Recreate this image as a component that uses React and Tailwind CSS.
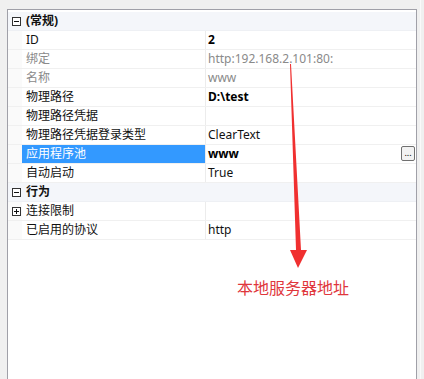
import React from 'react'

const rows = [
  { type: 'cat', label: '(常规)', open: true },
  { label: 'ID', value: '2', bold: true },
  { label: '绑定', value: 'http:192.168.2.101:80:', dim: true },
  { label: '名称', value: 'www', dim: true },
  { label: '物理路径', value: 'D:\\test', bold: true },
  { label: '物理路径凭据', value: '' },
  { label: '物理路径凭据登录类型', value: 'ClearText' },
  { label: '应用程序池', value: 'www', bold: true, selected: true, button: true },
  { label: '自动启动', value: 'True' },
  { type: 'cat', label: '行为', open: true },
  { label: '连接限制', value: '', expand: true },
  { label: '已启用的协议', value: 'http' },
]

function Box({ open }) {
  return (
    <svg width="9" height="9" viewBox="0 0 9 9" className="block">
      <rect x="0.5" y="0.5" width="8" height="8" fill="#fff" stroke="#333" />
      <line x1="2" y1="4.5" x2="7" y2="4.5" stroke="#111" />
      {!open && <line x1="4.5" y1="2" x2="4.5" y2="7" stroke="#111" />}
    </svg>
  )
}

function Row({ row }) {
  if (row.type === 'cat') {
    return (
      <div className="flex h-[19px] items-center bg-[#f4f6fa] border-b border-[#eef0f4]">
        <div className="w-[14px] flex justify-center pl-[3px]">
          <Box open={row.open} />
        </div>
        <span className="pl-[4px] font-bold text-[12px] text-[#111]">{row.label}</span>
      </div>
    )
  }

  let labelCls = 'w-[183px] flex items-center pl-[4px] text-[12px] '
  if (row.selected) labelCls += 'bg-[#3399ff] text-white'
  else if (row.dim) labelCls += 'text-[#8a8a8a]'
  else labelCls += 'text-[#111]'

  let valueCls = 'flex-1 flex items-center pl-[2px] pr-[1px] text-[12px] '
  if (row.bold) valueCls += 'font-bold text-black'
  else if (row.dim) valueCls += 'text-[#8a8a8a]'
  else valueCls += 'text-[#111]'

  return (
    <div className="flex h-[19px] border-b border-[#f0f0f0]">
      <div className="w-[14px] flex items-center justify-center pl-[3px] bg-[#fafafa]">
        {row.expand && <Box open={false} />}
      </div>
      <div className={labelCls}>{row.label}</div>
      <div className="w-px bg-[#ececec]" />
      <div className={valueCls}>
        <span className="flex-1">{row.value}</span>
        {row.button && (
          <span className="w-[14px] h-[15px] mb-[1px] rounded-[2px] border border-[#707070] bg-[#f2f2f2] text-[9px] leading-[12px] text-center text-black font-normal">
            ...
          </span>
        )}
      </div>
    </div>
  )
}

export default function App() {
  return (
    <div
      className="relative w-[424px] h-[379px] bg-[#f0f0f0] overflow-hidden flex"
      style={{ fontFamily: '"Noto Sans", "Noto Sans CJK SC", sans-serif' }}
    >
      <div className="ml-[7px] mt-[9px] w-[410px] h-[380px] bg-white border-l border-t border-r border-[#a0a0a8] pt-[2px]">
        {rows.map((r, i) => (
          <Row key={i} row={r} />
        ))}
      </div>
      <div className="ml-[3px] w-px h-full bg-[#fafafa]" />

      <svg className="absolute left-0 top-0" width="424" height="379" viewBox="0 0 424 379">
        <polygon points="290,64 291,64 301,250 307,250 298,268 290,250 296,250" fill="#f03030" />
      </svg>
      <div className="absolute left-[237px] top-[276px] text-[16px] text-[#e0363c]">
        本地服务器地址
      </div>
    </div>
  )
}
